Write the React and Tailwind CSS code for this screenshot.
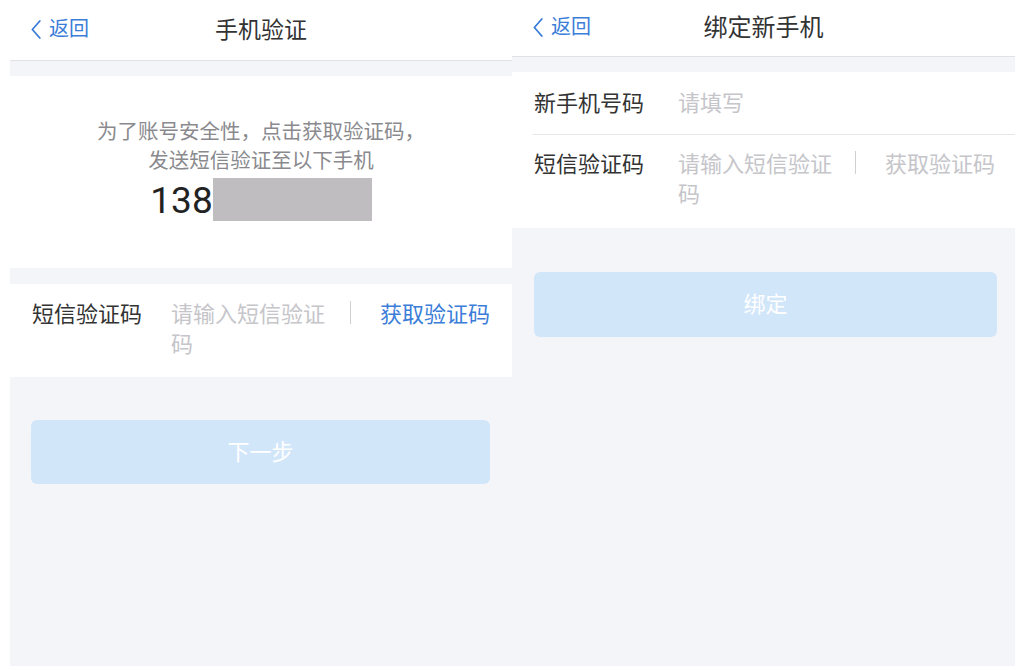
import { useState } from 'react'

function BackButton() {
  return (
    <button className="flex items-center gap-[8px] text-[20px] leading-none text-[#3b7dd8]">
      <svg width="10" height="19" viewBox="0 0 10 19" fill="none">
        <path d="M8.8 1 L1.4 9.5 L8.8 18" stroke="#3b7dd8" strokeWidth="1.8" strokeLinecap="round" strokeLinejoin="round" />
      </svg>
      <span className="pb-[2px]">返回</span>
    </button>
  )
}

function Header({ title, titleSize, height }) {
  return (
    <div className={`relative flex items-center justify-center bg-white border-b border-[#e2e2e6] ${height}`}>
      <div className="absolute left-[21px] top-0 bottom-0 flex items-center pb-[2px]">
        <BackButton />
      </div>
      <h1 className={`${titleSize} text-[#333] font-normal pb-[4px]`}>{title}</h1>
    </div>
  )
}

function CodeRow({ label, labelW, inputW, active, pr }) {
  return (
    <div className={`flex items-start pl-[22px] ${pr} text-[22px] leading-[30px]`}>
      <span className={`${labelW} shrink-0 text-[#333]`}>{label}</span>
      <span className={`${inputW} shrink-0 text-[#c5c5ca]`}>请输入短信验证码</span>
      <div className="h-[30px] ml-[13px] flex items-center">
        <div className="w-px h-[23px] bg-[#cfcfd4]" />
      </div>
      <span className={`ml-[29px] whitespace-nowrap ${active ? 'text-[#3b7dd8]' : 'text-[#c5c5ca]'}`}>获取验证码</span>
    </div>
  )
}

function VerifyPhone() {
  const [code] = useState('')
  return (
    <div className="w-[502px] ml-[10px] h-[666px] flex flex-col">
      <Header title="手机验证" titleSize="text-[23px]" height="h-[61px]" />
      <div className="flex-1 bg-[#f4f5f9] pt-[15px] flex flex-col">
        <div className="bg-white h-[192px] pt-[40px] text-center">
          <p className="text-[20.5px] leading-[29px] text-[#8a8a8e]">为了账号安全性，点击获取验证码，</p>
          <p className="text-[20.5px] leading-[29px] text-[#8a8a8e]">发送短信验证至以下手机</p>
          <div className="flex items-center justify-center mt-[2px]">
            <span className="font-['Roboto',sans-serif] text-[37px] leading-[43px] text-[#222] pt-[3px]">138</span>
            <div className="w-[159px] h-[43px] bg-[#bfbdc0]" />
          </div>
        </div>
        <div className="mt-[16px] bg-white pt-[13px] pb-[20px]">
          <CodeRow label="短信验证码" labelW="w-[139px]" inputW="w-[166px]" active pr="pr-[22px]" />
        </div>
        <div className="mt-[43px] ml-[21px] mr-[22px]">
          <button className="w-full h-[64px] rounded-[6px] bg-[#d2e6fa] text-white text-[22px] pb-[4px]">
            {code ? '下一步' : '下一步'}
          </button>
        </div>
      </div>
    </div>
  )
}

function BindPhone() {
  return (
    <div className="w-[503px] h-[666px] flex flex-col">
      <Header title="绑定新手机" titleSize="text-[24px]" height="h-[57px]" />
      <div className="flex-1 bg-[#f4f5f9] pt-[15px] flex flex-col">
        <div className="bg-white">
          <div className="ml-[21px] pl-px h-[63px] flex items-center pb-[5px] text-[22px] leading-[30px] border-b border-[#e6e6ea]">
            <span className="w-[144px] shrink-0 text-[#333]">新手机号码</span>
            <span className="text-[#c5c5ca]">请填写</span>
          </div>
          <div className="pt-[12px] pb-[21px]">
            <CodeRow label="短信验证码" labelW="w-[144px]" inputW="w-[164px]" pr="pr-[20px]" />
          </div>
        </div>
        <div className="mt-[44px] ml-[22px] mr-[18px]">
          <button className="w-full h-[65px] rounded-[6px] bg-[#d2e6fa] text-white text-[22px] pb-[4px]">绑定</button>
        </div>
      </div>
    </div>
  )
}

export default function App() {
  return (
    <div className="w-[1029px] h-[670px] bg-white flex font-['Noto_Sans_CJK_SC',sans-serif]">
      <VerifyPhone />
      <BindPhone />
    </div>
  )
}
